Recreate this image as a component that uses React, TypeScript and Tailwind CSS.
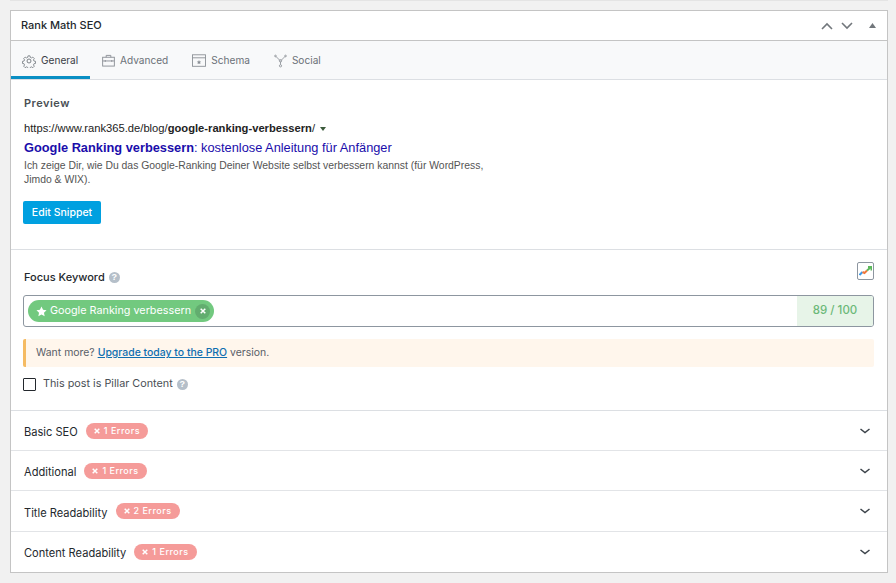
import React from "react";

const sans = "font-['Inter','Noto_Sans',sans-serif]";

function Gear() {
  return (
    <svg width="14" height="14" viewBox="0 0 24 24" fill="none" stroke="#6b7178" strokeWidth="1.5" strokeLinejoin="round">
      <path d="M10 2h4l.6 3 2.3 1 2.6-1.600 2.800 2.800-1.600 2.600 1 2.300 3 .6v4l-3 .6-1 2.300 1.600 2.600-2.800 2.800-2.600-1.600-2.300 1-.6 3h-4l-.6-3-2.300-1-2.600 1.600-2.800-2.800 1.600-2.600-1-2.300-3-.6v-4l3-.6 1-2.300-1.600-2.600 2.800-2.800 2.600 1.600 2.300-1z" transform="translate(12 12) scale(.88) translate(-12 -12)" />
      <circle cx="12" cy="12" r="3.400" />
    </svg>
  );
}

function Briefcase() {
  return (
    <svg width="13" height="13" viewBox="0 0 14 14" fill="none" stroke="#8b9096" strokeWidth="1">
      <rect x="0.700" y="3.500" width="12.600" height="9.500" />
      <path d="M0.700 7.500h12.600M4.500 3.500V1.500h5v2M3.500 6.500v2M10.500 6.500v2" />
    </svg>
  );
}

function Schema() {
  return (
    <svg width="14" height="13" viewBox="0 0 14 13" fill="none" stroke="#8b9096" strokeWidth="0.9">
      <rect x="0.500" y="0.800" width="13" height="11.500" />
      <path d="M0.500 3.800h13" />
      <path d="M7 6l.7 1.400 1.500.2-1.100 1 .3 1.500L7 9.400l-1.400.7.300-1.500-1.100-1 1.500-.2z" fill="#8b9096" stroke="none" />
    </svg>
  );
}

function Social() {
  return (
    <svg width="13" height="14" viewBox="0 0 14 14" fill="none" stroke="#8b9096" strokeWidth="0.9">
      <path d="M2 2l4.500 4.500M12 2L7.500 6.500M7 7.500v3.500" />
      <circle cx="7" cy="6.800" r="1.300" />
      <circle cx="1.600" cy="1.600" r="0.900" />
      <circle cx="12.400" cy="1.600" r="0.900" />
      <circle cx="7" cy="12.200" r="1.200" />
    </svg>
  );
}

function Help() {
  return (
    <span className="inline-flex h-[11px] w-[11px] items-center justify-center rounded-full bg-[#b5bfc9] font-['Liberation_Sans',sans-serif] text-[9px] font-bold leading-none text-white">
      ?
    </span>
  );
}

function Chevron({ up = false, color = "#72777c" }: { up?: boolean; color?: string }) {
  return (
    <svg width="12" height="8" viewBox="0 0 12 8" fill="none" stroke={color} strokeWidth="1.6">
      <path d={up ? "M1 7l5-5 5 5" : "M1 1l5 5 5-5"} />
    </svg>
  );
}

function Row({ title, badge, className, textClass = "mt-[4px]" }: { title: string; badge: string; className: string; textClass?: string }) {
  return (
    <div className={`flex items-center pl-[13px] pr-[17px] ${className}`}>
      <span className={`${textClass} text-[11.1px] text-[#23282d]`}>{title}</span>
      <span className="ml-2 flex h-4 items-center gap-[4px] rounded-full bg-[#f59b99] px-2 text-[9px] font-medium tracking-[0.5px] text-white">
        <svg width="6" height="6" viewBox="0 0 6 6" stroke="#fff" strokeWidth="1.500"><path d="M0.700 0.700l4.600 4.600M5.300 0.700L0.700 5.300" /></svg>
        {badge}
      </span>
      <span className="ml-auto flex">
        <svg width="10" height="6" viewBox="0 0 10 6" fill="none" stroke="#3c434a" strokeWidth="1.500"><path d="M0.500 1l4.500 3.500L9.500 1" /></svg>
      </span>
    </div>
  );
}

function Tab({ icon, label, active = false }: { icon: React.ReactNode; label: string; active?: boolean }) {
  return (
    <div className={`flex h-full items-center text-[10.1px] ${active ? "w-[79px] gap-[5px] border-b-[3px] border-[#0a8fc4] pl-[11px] pt-[4px] text-[#3b4046]" : "gap-[5px] pt-[1px] text-[#6b7178]"}`}>
      {icon}
      <span>{label}</span>
    </div>
  );
}

export default function App() {
  return (
    <div className={`h-[583px] w-[896px] overflow-hidden bg-[#f1f1f1] pl-[10px] ${sans}`}>
      <div className="h-[1px] w-[878px] bg-[#e4e4e4]" />
      <div className="mt-[9px] h-[563px] w-[878px] border border-[#c4c4c4] bg-white">
        <div className="flex h-[30px] items-center border-b border-[#c4c4c4] pl-[10px] pr-[11px]">
          <span className="text-[11px] font-medium text-[#23282d]">Rank Math SEO</span>
          <div className="ml-auto flex items-center">
            <Chevron up />
            <span className="ml-[8px] flex"><Chevron /></span>
            <svg className="ml-[16px]" width="7" height="5" viewBox="0 0 7 5"><path d="M3.500 0L7 5H0z" fill="#72777c" /></svg>
          </div>
        </div>

        <div className="flex h-[39px] items-center border-b border-[#dcdfe3] bg-[#f8f9fa] pr-2">
          <Tab active icon={<Gear />} label="General" />
          <div className="ml-[12px] flex h-full items-center gap-[24px]">
            <Tab icon={<Briefcase />} label="Advanced" />
            <Tab icon={<Schema />} label="Schema" />
            <Tab icon={<Social />} label="Social" />
          </div>
        </div>

        <div className="h-[170px] border-b border-[#dcdfe3] pl-[12px] pt-[16px]">
          <div className="pl-[1px] text-[11px] font-semibold leading-[14px] tracking-[0.5px] text-[#4a4f55]">Preview</div>
          <div className="mt-[11px] flex items-center pl-[1px] font-['Liberation_Sans',sans-serif] text-[11.2px] leading-[14px] text-[#222]">
            https://www.rank365.de/blog/<b>google-ranking-verbessern</b>/
            <svg className="ml-[5px] mt-[1px]" width="6" height="4" viewBox="0 0 6 4"><path d="M0 0h6L3 4z" fill="#3b5a3b" /></svg>
          </div>
          <div className="mt-[4px] pl-[1px] font-['Liberation_Sans',sans-serif] text-[12.8px] leading-[18px] text-[#1a0dab]">
            <b>Google Ranking verbessern</b>: kostenlose Anleitung für Anfänger
          </div>
          <div className="mt-[2px] w-[470px] pl-[1px] font-['Liberation_Sans',sans-serif] text-[10.4px] leading-[14px] text-[#545454]">
            Ich zeige Dir, wie Du das Google-Ranking Deiner Website selbst verbessern kannst (für WordPress, Jimdo &amp; WIX).
          </div>
          <button className="mt-[14px] flex h-[23px] w-[78px] items-center justify-center rounded-[2px] bg-[#00a0e0] text-[10.500px] font-medium text-white">
            Edit Snippet
          </button>
        </div>

        <div className="h-[161px] border-b border-[#dcdfe3] pl-[12px] pr-[13px]">
          <div className="flex h-[45px] items-start justify-between">
            <div className="mt-[20px] flex items-center gap-[4px] pl-[1px] text-[11px] font-medium leading-[14px] text-[#23282d]">
              Focus Keyword <Help />
            </div>
            <div className="mt-[12px] flex h-[18px] w-[17px] items-center justify-center rounded-[2px] border border-[#8d96a0] bg-white">
              <svg width="13" height="10" viewBox="0 0 13 10" fill="none" strokeWidth="2">
                <path d="M0.500 9L3.500 6" stroke="#3c9be8" />
                <path d="M3.500 6L5.500 7L8 4.500" stroke="#f0783c" />
                <path d="M8 4.500L11.500 1.500" stroke="#5cb85c" />
                <path d="M9 1h3.500V4.500" stroke="#5cb85c" />
              </svg>
            </div>
          </div>
          <div className="flex h-8 items-stretch rounded-[3px] border border-[#8d96a0] bg-white">
            <div className="flex flex-1 items-center pl-[4px]">
              <span className="flex h-[22px] w-[186px] items-center rounded-full bg-[#72c97f] pl-[8px] text-[10.8px] text-white">
                <svg width="11" height="11" viewBox="0 0 24 24" fill="#fff"><path d="M12 1l3.400 7.200 7.600 1-5.600 5.400 1.500 7.900-6.900-3.900-6.900 3.900 1.500-7.900L1 9.200l7.600-1z" /></svg>
                <span className="ml-[3px]">Google Ranking verbessern</span>
                <span className="ml-auto mr-[4px] flex h-[15px] w-[15px] items-center justify-center rounded-full bg-[#62ad6f]">
                  <svg width="6" height="6" viewBox="0 0 6 6" stroke="#fff" strokeWidth="1.500"><path d="M0.700 0.700l4.600 4.600M5.300 0.700L0.700 5.300" /></svg>
                </span>
              </span>
            </div>
            <div className="flex w-[76px] items-center justify-center rounded-r-[2px] bg-[#e7f4e8] text-[11.500px] font-medium text-[#6cb978]">
              89 / 100
            </div>
          </div>
          <div className="mt-[12px] flex h-[28px] items-center rounded-[2px] border-l-[3px] border-[#f5bb63] bg-[#fff6ec] pl-[10px] text-[10.45px] text-[#5a6068]">
            Want more?&nbsp;<a className="font-medium text-[#0f6eb0] underline">Upgrade today to the PRO</a>&nbsp;version.
          </div>
          <div className="mt-[9px] flex items-center text-[10.8px] text-[#4a4f55]">
            <span className="h-[13px] w-[13px] rounded-[1px] border border-[#23282d] bg-white" />
            <span className="ml-[7px]">This post is Pillar Content</span>
            <span className="ml-[4px] flex"><Help /></span>
          </div>
        </div>

        <Row title="Basic SEO" badge="1 Errors" className="h-[40px] border-b border-[#e2e4e7]" />
        <Row title="Additional" badge="1 Errors" className="h-[40px] border-b border-[#e2e4e7]" />
        <Row title="Title Readability" badge="2 Errors" className="h-[41px] border-b border-[#e2e4e7]" />
        <Row title="Content Readability" badge="1 Errors" className="h-[40px]" textClass="mt-[2px]" />
      </div>
    </div>
  );
}
